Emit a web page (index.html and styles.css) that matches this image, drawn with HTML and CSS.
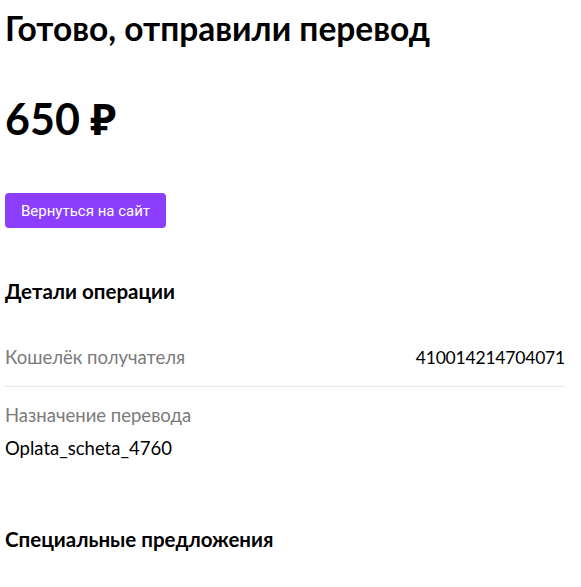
FILE: index.html
```html
<!DOCTYPE html>
<html lang="ru">
<head>
<meta charset="utf-8">
<link rel="stylesheet" href="styles.css">
</head>
<body>
<main class="page">
  <h1 class="title">Готово, отправили перевод</h1>
  <div class="amount">650 ₽</div>
  <a class="btn" href="#">Вернуться на сайт</a>
  <h2 class="section">Детали операции</h2>
  <div class="row row-split">
    <span class="label">Кошелёк получателя</span>
    <span class="value value-num">410014214704071</span>
  </div>
  <div class="row row-stack">
    <span class="label">Назначение перевода</span>
    <span class="value">Oplata_scheta_4760</span>
  </div>
  <h2 class="section section-offers">Специальные предложения</h2>
</main>
</body>
</html>
```
FILE: styles.css
```css
* { box-sizing: border-box; }
html, body { margin: 0; padding: 0; background: #fff; }
body {
  font-family: "Lato", "Noto Sans", sans-serif;
  color: #000;
}
.page {
  width: 560px;
  margin-left: 5px;
  display: flex;
  flex-direction: column;
  align-items: flex-start;
}
.title {
  margin: 8px 0 0;
  font-size: 33.5px;
  line-height: 40px;
  font-weight: 700;
}
.amount {
  margin-top: 46px;
  font-size: 43px;
  line-height: 50px;
  font-weight: 700;
}
.btn {
  margin-top: 49px;
  display: inline-flex;
  align-items: center;
  height: 35px;
  padding: 0 16px;
  background: #8b3ffd;
  color: #fff;
  border-radius: 4px;
  text-decoration: none;
  font-family: "Roboto", "Liberation Sans", sans-serif;
  font-size: 15px;
}
.section {
  margin: 50px 0 0;
  font-size: 20.5px;
  line-height: 26px;
  font-weight: 700;
}
.row {
  width: 100%;
  font-size: 18.5px;
  line-height: 23px;
}
.row-split {
  margin-top: 42px;
  display: flex;
  justify-content: space-between;
  padding-bottom: 17px;
  border-bottom: 1px solid #e8e8e8;
}
.row-stack {
  margin-top: 17px;
  display: flex;
  flex-direction: column;
  gap: 10px;
}
.label { color: #7a7a7a; }
.value { color: #000; }
.value-num { font-size: 17.5px; letter-spacing: -0.2px; }
.section-offers { margin-top: 66px; }
```
